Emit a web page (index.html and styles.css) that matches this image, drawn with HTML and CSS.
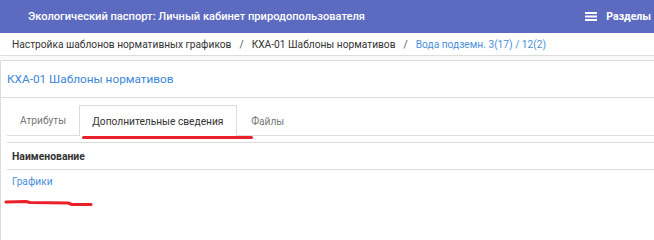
FILE: index.html
```html
<!DOCTYPE html>
<html lang="ru">
<head>
<meta charset="utf-8">
<title>Экологический паспорт</title>
<link rel="stylesheet" href="styles.css">
</head>
<body>
<header class="topbar">
  <div class="brand">Экологический паспорт: Личный кабинет природопользователя</div>
  <div class="sections">
    <svg class="burger" width="12" height="9" viewBox="0 0 12 9"><rect x="0" y="0" width="12" height="2" fill="#fff"/><rect x="0" y="3.5" width="12" height="2" fill="#fff"/><rect x="0" y="7" width="12" height="2" fill="#fff"/></svg>
    <span>Разделы</span>
  </div>
</header>
<nav class="crumbs">
  <span>Настройка шаблонов нормативных графиков</span>
  <span class="sep">/</span>
  <span>КХА-01 Шаблоны нормативов</span>
  <span class="sep">/</span>
  <a class="crumb-link">Вода подземн. 3(17) / 12(2)</a>
</nav>
<div class="spacer"></div>
<section class="card">
  <div class="card-head">КХА-01 Шаблоны нормативов</div>
  <div class="card-body">
    <ul class="tabs">
      <li class="tab">Атрибуты</li>
      <li class="tab active">Дополнительные сведения<span class="mark mark-tab"></span></li>
      <li class="tab">Файлы</li>
    </ul>
    <div class="table">
      <div class="th">Наименование</div>
      <div class="td"><a class="link">Графики</a></div>
    </div>
    <svg class="mark-row" width="90" height="10" viewBox="0 0 90 10"><path d="M2 3 L22 2.5 L26 3.5 L64 4 L68 5.5 L87 5.5" stroke="#e8212b" stroke-width="3.2" fill="none" stroke-linecap="round" stroke-linejoin="round"/></svg>
  </div>
</section>
</body>
</html>
```
FILE: styles.css
```css
* { box-sizing: border-box; }
html, body { margin: 0; padding: 0; background: #fff; }
body { font-family: Roboto, "Noto Sans", Arial, sans-serif; color: #333; }
a { cursor: pointer; }

.topbar {
  height: 33px;
  background: #5c6bc0;
  color: #fff;
  display: flex;
  align-items: center;
  justify-content: space-between;
  padding: 0 3px 0 28px;
}
.brand { font-size: 11.1px; font-weight: 500; }
.sections { display: flex; align-items: center; gap: 9px; font-size: 10.5px; font-weight: 700; }
.burger { display: block; }

.crumbs {
  height: 23px;
  border-bottom: 1px solid #dcdcdc;
  display: flex;
  align-items: center;
  padding-left: 12px;
  font-size: 10.2px;
  color: #333;
  gap: 8px;
}
.crumbs .sep { color: #555; }
.crumb-link { color: #4a8fd8; }

.spacer { height: 4px; background: #fafafa; }

.card {
  border-top: 1px solid #dcdcdc;
  border-left: 1px solid #dcdcdc;
}
.card-head {
  height: 37px;
  border-bottom: 1px solid #dcdcdc;
  display: flex;
  align-items: center;
  padding-left: 6px;
  font-size: 11.8px;
  color: #3d87d6;
}
.card-body { position: relative; padding: 7px 0 0 6px; height: 143px; }

.tabs {
  list-style: none;
  margin: 0;
  padding: 0;
  display: flex;
  border-bottom: 1px solid #dcdcdc;
  height: 31px;
}
.tab {
  position: relative;
  font-size: 10.2px;
  color: #777;
  padding: 0 13px;
  display: flex;
  align-items: center;
  height: 31px;
  border: 1px solid transparent;
  border-bottom: none;
  white-space: nowrap;
}
.tab:first-child { padding: 0 13px 0 13px; border: none; }
.tab.active {
  color: #333;
  border-color: #dcdcdc;
  background: #fff;
  padding: 0 12px;
  width: 158px;
  flex: none;
}
.mark {
  position: absolute;
  background: #e8212b;
  border-radius: 2px;
}
.mark-tab { left: 2px; top: 30px; width: 171px; height: 3px; }

.table { margin-top: 6px; }
.th {
  height: 28px;
  border-top: 1px solid #dcdcdc;
  border-bottom: 1px solid #dcdcdc;
  display: flex;
  align-items: center;
  padding-left: 5px;
  font-size: 10.4px;
  font-weight: 700;
  color: #333;
}
.td {
  height: 22px;
  display: flex;
  align-items: center;
  padding-left: 5px;
  font-size: 10.2px;
}
.link { color: #4a8fd8; }
.mark-row { position: absolute; left: 3px; top: 101px; display: block; }
```
